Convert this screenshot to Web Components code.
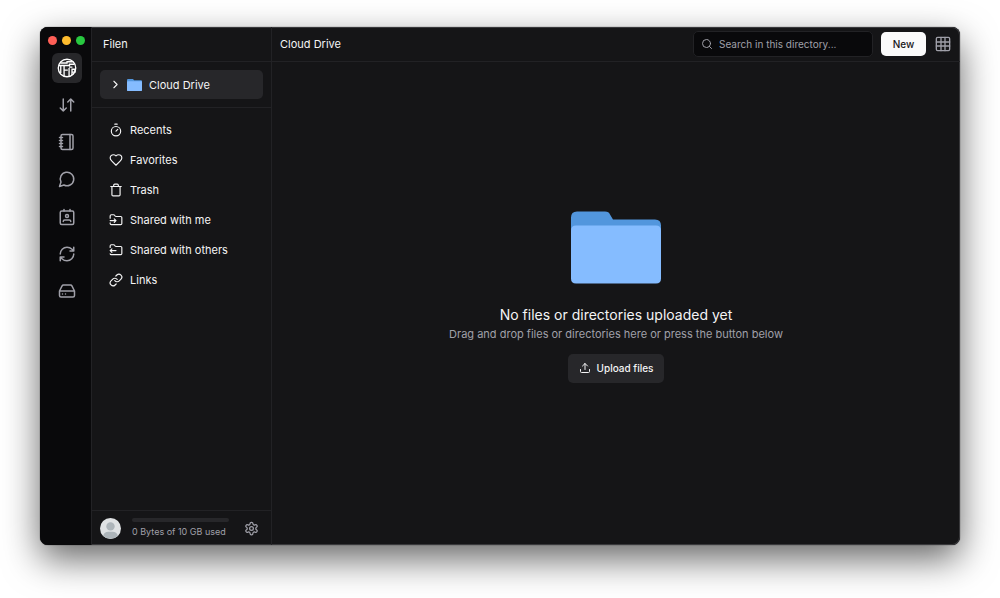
<!DOCTYPE html>
<html lang="en">
<head>
<meta charset="utf-8">
<meta name="viewport" content="width=device-width, initial-scale=1">
<title>Filen – Cloud Drive</title>
<style>
  :root {
    --rail: #09090b; --panel: #151517; --line: #222225; --raised: #27272a;
    --text: #f4f4f5; --muted: #a0a0a9;
  }
  * { box-sizing: border-box; }
  body {
    margin: 0; padding: 27px 40px 53px; min-height: 100vh; display: flex;
    background: #fff; color: var(--text);
    font: 11px/18px Inter, "Liberation Sans", sans-serif;
  }
</style>
</head>
<body>
<filen-app></filen-app>
<script>
const stroke = {
  transfers: '<path d="m3 16 4 4 4-4M7 20V4M21 8l-4-4-4 4M17 4v16"/>',
  notes: '<path d="M2 6h4M2 10h4M2 14h4M2 18h4M16 2v20"/><rect x="4" y="2" width="16" height="20" rx="2"/>',
  chats: '<path d="M7.9 20A9 9 0 1 0 4 16.100L2 22Z"/>',
  contacts: '<path d="M16 2v2M8 2v2M17 18a2 2 0 0 0-2-2H9a2 2 0 0 0-2 2"/><circle cx="12" cy="10.500" r="2"/><rect x="3" y="4" width="18" height="18" rx="2"/>',
  syncs: '<path d="M21 12a9 9 0 0 0-9-9 9.750 9.750 0 0 0-6.740 2.740L3 8M3 3v5h5M3 12a9 9 0 0 0 9 9 9.750 9.750 0 0 0 6.740-2.740L21 16M16 16h5v5" transform="matrix(-1 0 0 1 24 0)"/>',
  drive: '<path d="M22 12H2M5.450 5.110 2 12v6a2 2 0 0 0 2 2h16a2 2 0 0 0 2-2v-6l-3.450-6.890A2 2 0 0 0 16.760 4H7.240a2 2 0 0 0-1.790 1.110zM6 16h.01M10 16h.01"/>',
  chevron: '<path d="m9 18 6-6-6-6"/>',
  timer: '<path d="M10 2h4M12 14l3-3"/><circle cx="12" cy="14" r="8"/>',
  heart: '<path d="M19 14c1.490-1.460 3-3.210 3-5.500A5.500 5.500 0 0 0 16.500 3c-1.760 0-3 .5-4.500 2-1.500-1.500-2.740-2-4.500-2A5.500 5.500 0 0 0 2 8.500c0 2.300 1.500 4.050 3 5.500l7 7Z"/>',
  trash: '<path d="M3 6h18M19 6v14c0 1-1 2-2 2H7c-1 0-2-1-2-2V6M8 6V4c0-1 1-2 2-2h4c1 0 2 1 2 2v2"/>',
  folderIn: '<path d="M2 9V5a2 2 0 0 1 2-2h3.900a2 2 0 0 1 1.690.9l.81 1.200a2 2 0 0 0 1.670.9H20a2 2 0 0 1 2 2v10a2 2 0 0 1-2 2H4a2 2 0 0 1-2-2v-1M2 13h10M9 16l3-3-3-3"/>',
  folderOut: '<path d="M2 7.500V5a2 2 0 0 1 2-2h3.900a2 2 0 0 1 1.690.9l.81 1.200a2 2 0 0 0 1.670.9H20a2 2 0 0 1 2 2v10a2 2 0 0 1-2 2H4a2 2 0 0 1-2-1.500M2 13h10M5 10l-3 3 3 3"/>',
  link: '<path d="M10 13a5 5 0 0 0 7.540.54l3-3a5 5 0 0 0-7.070-7.070l-1.720 1.710M14 11a5 5 0 0 0-7.540-.54l-3 3a5 5 0 0 0 7.070 7.070l1.710-1.710"/>',
  search: '<circle cx="11" cy="11" r="8"/><path d="m21 21-4.300-4.300"/>',
  grid: '<rect x="2" y="2" width="20" height="20" rx="2"/><path d="M2 9h20M2 15h20M9 2v20M15 2v20"/>',
  upload: '<path d="M21 15v4a2 2 0 0 1-2 2H5a2 2 0 0 1-2-2v-4M17 8l-5-5-5 5M12 3v12"/>',
  settings: '<path d="M12.220 2h-.44a2 2 0 0 0-2 2v.18a2 2 0 0 1-1 1.730l-.43.25a2 2 0 0 1-2 0l-.15-.08a2 2 0 0 0-2.730.73l-.22.38a2 2 0 0 0 .73 2.730l.15.1a2 2 0 0 1 1 1.720v.51a2 2 0 0 1-1 1.740l-.15.09a2 2 0 0 0-.73 2.730l.22.38a2 2 0 0 0 2.730.73l.15-.08a2 2 0 0 1 2 0l.43.25a2 2 0 0 1 1 1.730V20a2 2 0 0 0 2 2h.44a2 2 0 0 0 2-2v-.18a2 2 0 0 1 1-1.730l.43-.25a2 2 0 0 1 2 0l.15.08a2 2 0 0 0 2.730-.73l.22-.39a2 2 0 0 0-.73-2.730l-.15-.08a2 2 0 0 1-1-1.740v-.5a2 2 0 0 1 1-1.740l.15-.09a2 2 0 0 0 .73-2.730l-.22-.38a2 2 0 0 0-2.730-.73l-.15.08a2 2 0 0 1-2 0l-.43-.25a2 2 0 0 1-1-1.730V4a2 2 0 0 0-2-2z"/><circle cx="12" cy="12" r="3"/>',
  brand: '<g stroke-width="1.600" stroke-linecap="butt" stroke-linejoin="miter"><circle cx="12" cy="12" r="10.500"/><path d="M4 6h8V4.500h7M2 9h6M4.500 9v9M8.500 21.500V9H15V7.500h6M8.500 14.500H13M14.500 12v10M14.500 11h4M18 20.500V13.500h3.500V17H18"/></g>'
};
const solid = {
  folder: '<path fill="#5296dd" d="M0 6q0-6 6-6h28q4 0 5 3l3 5h42q6 0 6 6v20H0z"/><path fill="#85bcff" d="M0 19q0-5 5-5h80q5 0 5 5v48q0 5-5 5H5q-5 0-5-5z"/>',
  avatar: '<circle cx="10" cy="10" r="10" fill="#dfe2e4"/><circle cx="10" cy="8" r="4" fill="#adb5ba"/><path fill="#adb5ba" d="M3 17q1-4 5-4h4q4 0 5 4a10 10 0 0 1-14 0z"/>'
};
const viewBox = { folder: '0 0 90 72', avatar: '0 0 20 20' };

function define(name, html) {
  const template = document.createElement('template');
  template.innerHTML = html;
  customElements.define(name, class extends HTMLElement {
    constructor() {
      super();
      this.attachShadow({ mode: 'open' }).append(template.content.cloneNode(true));
    }
  });
}

customElements.define('ui-icon', class extends HTMLElement {
  connectedCallback() {
    if (this.shadowRoot) return;
    const name = this.getAttribute('name');
    this.attachShadow({ mode: 'open' }).innerHTML = `
      <style>
        :host { display: block; flex: none; width: var(--w, 14px); height: var(--h, var(--w, 14px)); }
        svg { display: block; width: 100%; height: 100%; }
      </style>
      <svg viewBox="${viewBox[name] || '0 0 24 24'}" aria-hidden="true" fill="none" ${solid[name] ? '' :
        'stroke="currentColor" stroke-width="2" stroke-linecap="round" stroke-linejoin="round"'}>${solid[name] || stroke[name]}</svg>`;
  }
});

customElements.define('rail-link', class extends HTMLElement {
  connectedCallback() {
    if (this.shadowRoot) return;
    this.attachShadow({ mode: 'open' }).innerHTML = `
      <style>
        :host { display: grid; place-items: center; color: var(--muted); --w: 18px; }
        :host([active]) { color: #fff; --w: 20px; }
        a { display: grid; place-items: center; width: 30px; height: 30px; border-radius: 6px; color: inherit; }
        :host([active]) a { background: var(--raised); }
      </style>
      <a href="#" aria-label="${this.getAttribute('label')}"><ui-icon name="${this.getAttribute('icon')}"></ui-icon></a>`;
  }
});

define('app-rail', `
  <style>
    :host { box-sizing: border-box; display: block; width: 52px; flex: none; background: var(--rail); border-right: 1px solid var(--line); padding-top: 9px; }
    .lights { display: flex; gap: 5px; padding-left: 8px; height: 13px; }
    .lights i { width: 9px; height: 9px; border-radius: 50%; background: #ff5f57; }
    .lights i:nth-child(2) { background: #febc2e; }
    .lights i:nth-child(3) { background: #28c840; }
    nav { display: grid; grid-template-rows: repeat(7, 1fr); height: 261px; padding-left: 3px; }
  </style>
  <div class="lights"><i></i><i></i><i></i></div>
  <nav>
    <rail-link active icon="brand" label="Cloud Drive"></rail-link>
    <rail-link icon="transfers" label="Transfers"></rail-link>
    <rail-link icon="notes" label="Notes"></rail-link>
    <rail-link icon="chats" label="Chats"></rail-link>
    <rail-link icon="contacts" label="Contacts"></rail-link>
    <rail-link icon="syncs" label="Syncs"></rail-link>
    <rail-link icon="drive" label="Network drive"></rail-link>
  </nav>`);

customElements.define('side-link', class extends HTMLElement {
  connectedCallback() {
    if (this.shadowRoot) return;
    this.attachShadow({ mode: 'open' }).innerHTML = `
      <style>
        :host { display: block; }
        a { display: flex; align-items: center; gap: 7px; height: 30px; padding: 0 9px; color: inherit; text-decoration: none; }
      </style>
      <a href="#"><ui-icon name="${this.getAttribute('icon')}"></ui-icon><slot></slot></a>`;
  }
});

define('storage-bar', `
  <style>
    :host { box-sizing: border-box; display: flex; align-items: center; height: 35px; padding: 0 12px 0 8px; border-top: 1px solid var(--line); color: var(--muted); }
    .avatar { --w: 21px; }
    .usage { flex: 1; margin: 0 15px 0 11px; }
    .track { height: 4px; border-radius: 2px; background: var(--raised); }
    .label { font-size: 9px; line-height: 12px; margin-top: 4px; white-space: nowrap; }
    button { border: 0; padding: 0; background: none; color: inherit; --w: 15px; }
  </style>
  <ui-icon class="avatar" name="avatar"></ui-icon>
  <div class="usage"><div class="track"></div><div class="label">0 Bytes of 10 GB used</div></div>
  <button type="button" aria-label="Settings"><ui-icon name="settings"></ui-icon></button>`);

define('app-sidebar', `
  <style>
    * { box-sizing: border-box; }
    :host { box-sizing: border-box; display: flex; flex-direction: column; width: 180px; flex: none; border-right: 1px solid var(--line); }
    header { height: 35px; padding: 0 11px; line-height: 34px; border-bottom: 1px solid var(--line); }
    .root { padding: 8px; border-bottom: 1px solid var(--line); }
    .root a { display: flex; align-items: center; height: 29px; padding: 0 9px; border-radius: 5px; background: var(--raised); color: inherit; text-decoration: none; }
    .chevron { --w: 13px; }
    .folder { --w: 15px; --h: 12px; margin: 0 7px 0 5px; }
    nav { flex: 1; padding: 7px 8px; }
  </style>
  <header>Filen</header>
  <div class="root"><a href="#"><ui-icon class="chevron" name="chevron"></ui-icon><ui-icon class="folder" name="folder"></ui-icon>Cloud Drive</a></div>
  <nav>
    <side-link icon="timer">Recents</side-link>
    <side-link icon="heart">Favorites</side-link>
    <side-link icon="trash">Trash</side-link>
    <side-link icon="folderIn">Shared with me</side-link>
    <side-link icon="folderOut">Shared with others</side-link>
    <side-link icon="link">Links</side-link>
  </nav>
  <storage-bar></storage-bar>`);

define('drive-toolbar', `
  <style>
    * { box-sizing: border-box; }
    :host { box-sizing: border-box; display: flex; align-items: center; height: 35px; padding: 0 9px 0 8px; border-bottom: 1px solid var(--line); }
    h1 { flex: 1; margin: 0; font-size: 11px; font-weight: 400; }
    label { display: flex; align-items: center; gap: 6px; width: 180px; height: 26px; padding: 0 7px; border: 1px solid var(--line); border-radius: 5px; background: var(--rail); color: var(--muted); --w: 12px; }
    input { flex: 1; min-width: 0; padding: 0; border: 0; outline: 0; background: none; color: inherit; font: inherit; font-size: 10px; }
    input::placeholder { color: var(--muted); opacity: 1; }
    button { padding: 0; border: 0; font: inherit; }
    .new { width: 45px; height: 24px; margin: 0 9px 0 8px; border-radius: 5px; background: #fafafa; color: #18181b; font-size: 10px; font-weight: 500; }
    .view { background: none; color: var(--muted); --w: 16px; }
  </style>
  <h1>Cloud Drive</h1>
  <label><ui-icon name="search"></ui-icon><input type="text" placeholder="Search in this directory..." aria-label="Search in this directory"></label>
  <button class="new" type="button">New</button>
  <button class="view" type="button" aria-label="Grid view"><ui-icon name="grid"></ui-icon></button>`);

define('empty-state', `
  <style>
    :host { display: flex; flex-direction: column; align-items: center; justify-content: center; padding-bottom: 14px; text-align: center; }
    .folder { --w: 90px; --h: 73px; }
    h2 { margin: 21px 0 0; font-size: 14px; line-height: 20px; font-weight: 400; }
    p { margin: 0; line-height: 18px; color: var(--muted); }
    button { display: flex; align-items: center; gap: 6px; height: 29px; margin-top: 11px; padding: 0 11px; border: 0; border-radius: 5px; background: var(--raised); color: inherit; font: inherit; font-size: 10px; font-weight: 500; --w: 12px; }
  </style>
  <ui-icon class="folder" name="folder"></ui-icon>
  <h2>No files or directories uploaded yet</h2>
  <p>Drag and drop files or directories here or press the button below</p>
  <button type="button"><ui-icon name="upload"></ui-icon>Upload files</button>`);

define('filen-app', `
  <style>
    :host { flex: 1; display: flex; overflow: hidden; border-radius: 8px; background: var(--panel);
      box-shadow: inset 0 0 0 1px #38383b, 0 0 1px #000, 0 14px 36px rgba(0, 0, 0, .6); }
    main { flex: 1; min-width: 0; display: flex; flex-direction: column; }
    empty-state { flex: 1; }
  </style>
  <app-rail></app-rail>
  <app-sidebar></app-sidebar>
  <main><drive-toolbar></drive-toolbar><empty-state></empty-state></main>`);
</script>
</body>
</html>
